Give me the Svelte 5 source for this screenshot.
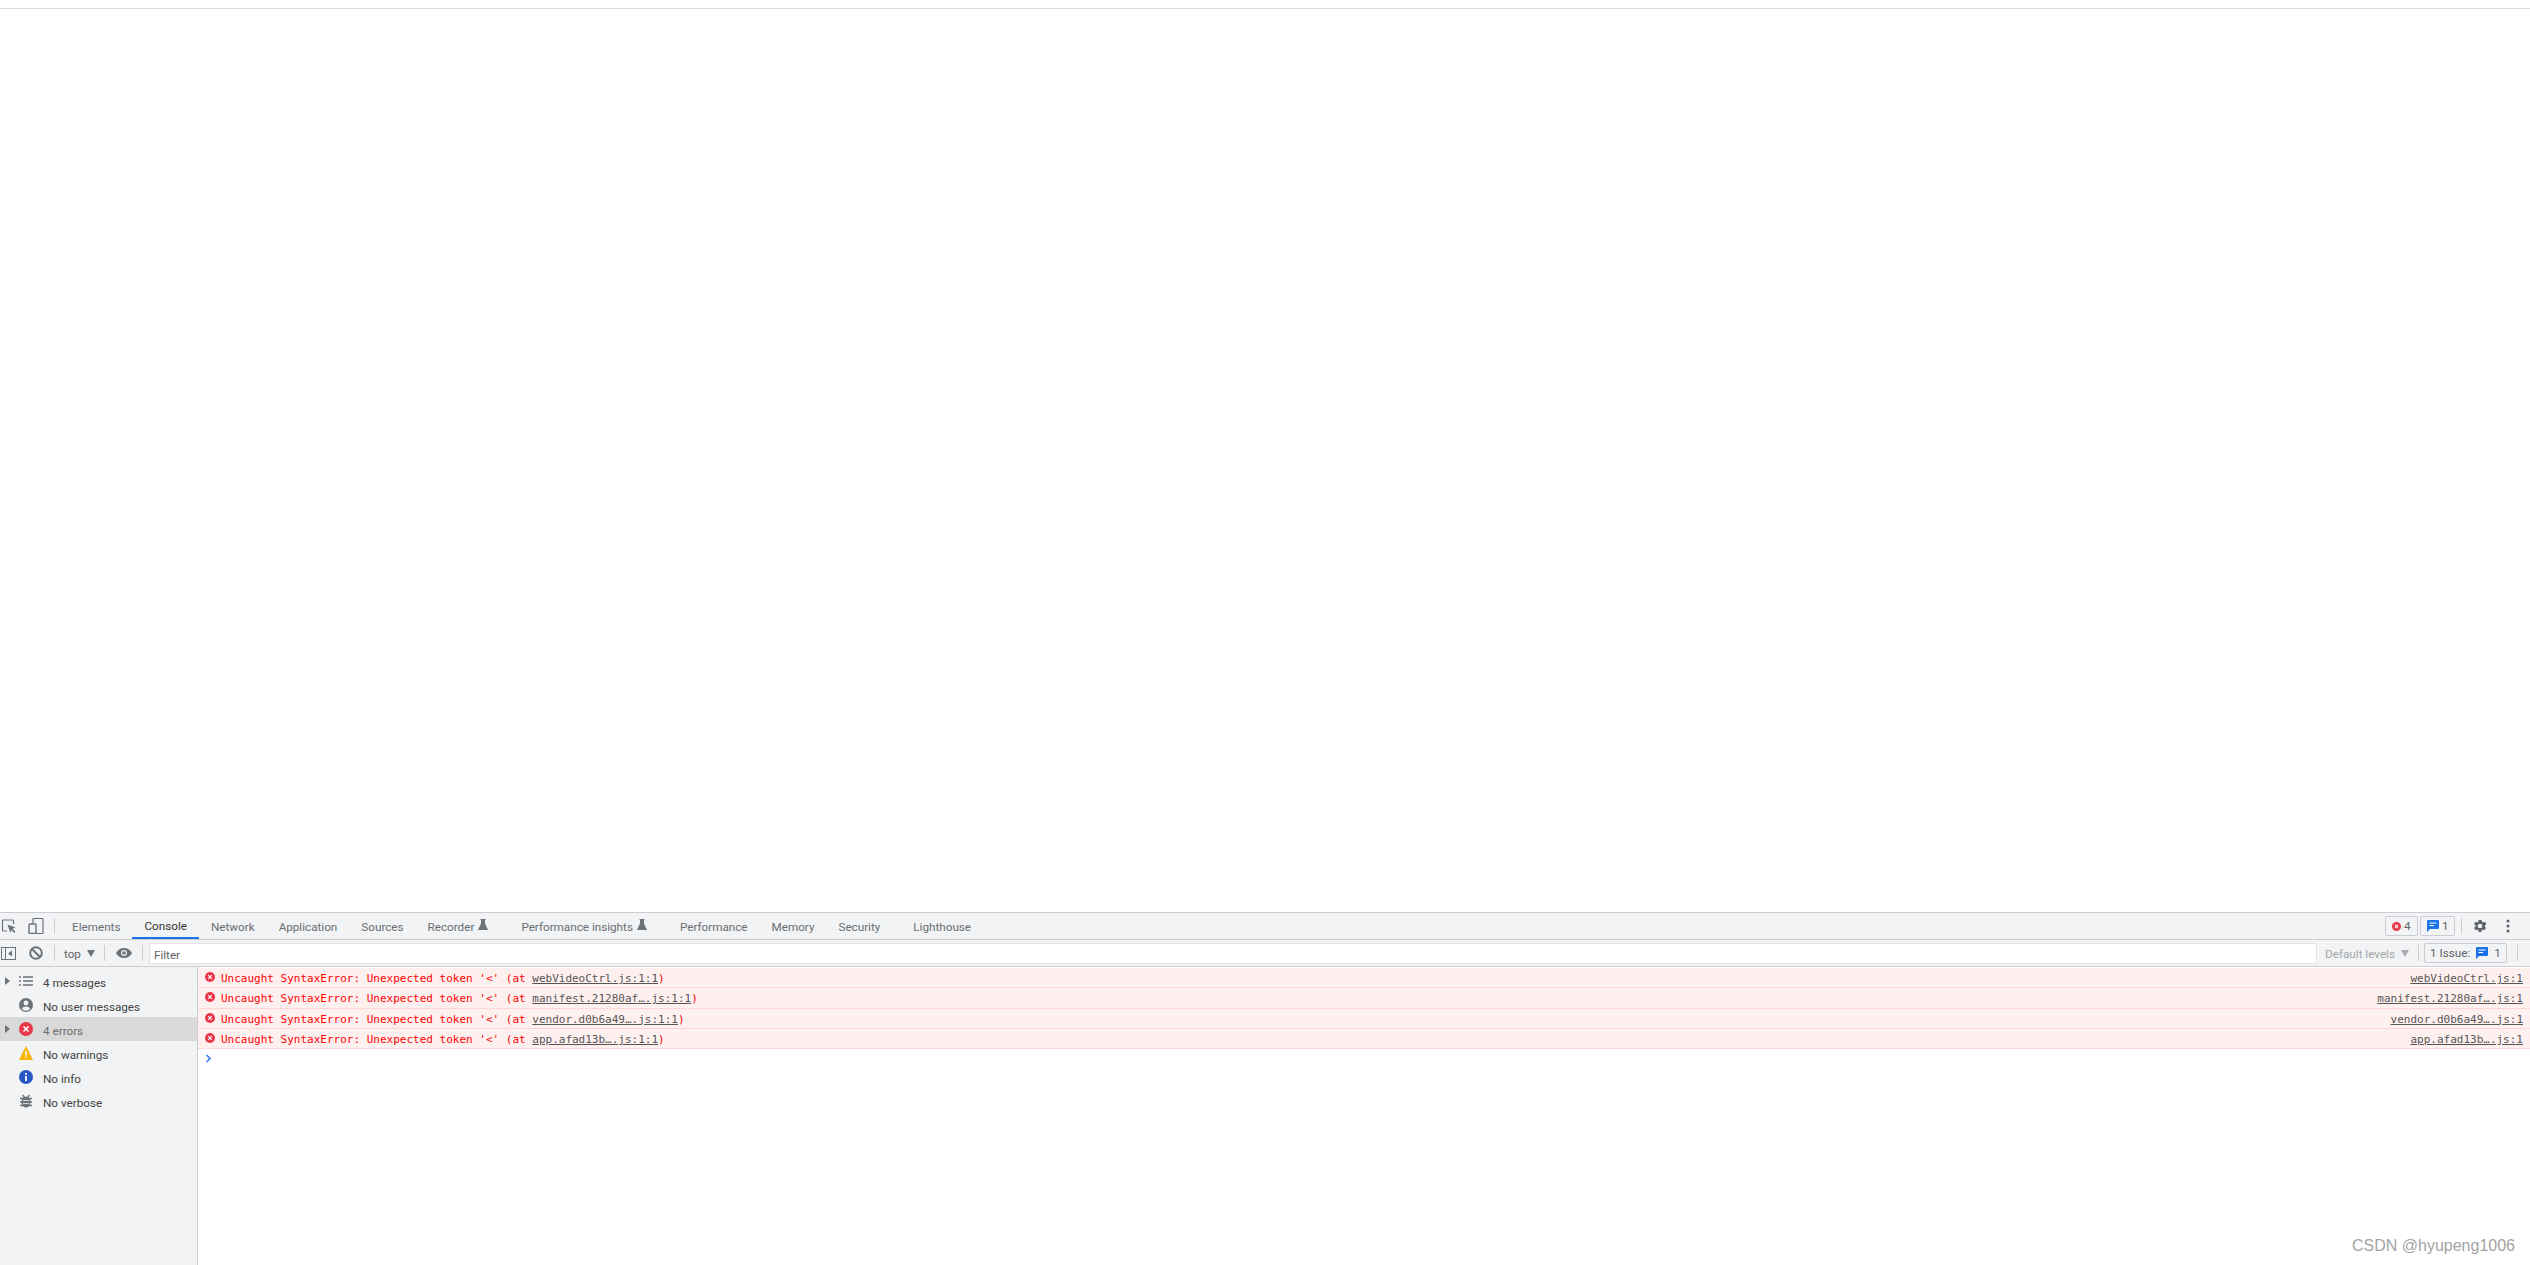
<script>
	const tabs = [
		{ name: 'Elements' },
		{ name: 'Console', active: true },
		{ name: 'Network' },
		{ name: 'Application' },
		{ name: 'Sources' },
		{ name: 'Recorder', flask: true },
		{ name: 'Performance insights', flask: true },
		{ name: 'Performance' },
		{ name: 'Memory' },
		{ name: 'Security', wide: true },
		{ name: 'Lighthouse' }
	];

	const errors = [
		{ link: 'webVideoCtrl.js:1:1', source: 'webVideoCtrl.js:1' },
		{ link: 'manifest.21280af….js:1:1', source: 'manifest.21280af….js:1' },
		{ link: 'vendor.d0b6a49….js:1:1', source: 'vendor.d0b6a49….js:1' },
		{ link: 'app.afad13b….js:1:1', source: 'app.afad13b….js:1' }
	];
</script>

{#snippet errorIcon(size)}
	<svg width={size} height={size} viewBox="0 0 14 14">
		<circle cx="7" cy="7" r="7" fill="#e8374a" />
		<path d="M4.5 4.5l5 5M9.5 4.5l-5 5" stroke="#fff" stroke-width="1.6" />
	</svg>
{/snippet}

{#snippet flask()}
	<svg class="flask" width="10" height="11" viewBox="0 0 10 11">
		<path d="M2.5 0h5v1H7v3.5l3 6.5H0l3-6.5V1h-.5z" fill="#6e7378" />
	</svg>
{/snippet}

{#snippet chat()}
	<svg width="12" height="12" viewBox="0 0 12 12">
		<path d="M1 0h10a1 1 0 0 1 1 1v7a1 1 0 0 1-1 1H3l-3 3V1a1 1 0 0 1 1-1z" fill="#1a73e8" />
		<path d="M2.5 3h7M2.5 5.5h4.500" stroke="#fff" stroke-width="1.2" />
	</svg>
{/snippet}

<div class="page">
	<div class="top-line"></div>
	<div class="viewport"></div>

	<div class="devtools">
		<div class="tabbar">
			<button class="icon-btn first" aria-label="Inspect">
				<svg width="16" height="16" viewBox="0 0 16 16">
					<path d="M6 13H2.500a1 1 0 0 1-1-1V3a1 1 0 0 1 1-1h9a1 1 0 0 1 1 1v3" fill="none" stroke="#6e7378" stroke-width="1.200" />
					<path d="M6.500 6.500l8 3-3 1.200 3 3-1.200 1.200-3-3-1 3z" fill="#6e7378" />
				</svg>
			</button>
			<button class="icon-btn device" aria-label="Device">
				<svg width="16" height="16" viewBox="0 0 16 16">
					<path d="M5 5V1.500a1 1 0 0 1 1-1h8a1 1 0 0 1 1 1v13a1 1 0 0 1-1 1H8" fill="none" stroke="#6e7378" stroke-width="1.200" />
					<rect x="1" y="6" width="7" height="9.500" rx="1" fill="none" stroke="#6e7378" stroke-width="1.400" />
				</svg>
			</button>
			<span class="sep tab-sep"></span>
			<div class="tabs">
				{#each tabs as tab}
					<div class="tab" class:active={tab.active} class:wide={tab.wide}>
						{tab.name}
						{#if tab.flask}{@render flask()}{/if}
					</div>
				{/each}
			</div>
			<div class="right">
				<div class="badge error-badge">{@render errorIcon(9)}<span>4</span></div>
				<div class="badge info-badge">{@render chat()}<span>1</span></div>
				<span class="sep"></span>
				<svg class="gear" width="16" height="16" viewBox="0 0 24 24">
					<path d="M19.400 13a7.700 7.700 0 0 0 0-2l2.200-1.700-2.100-3.600-2.600 1a7.600 7.600 0 0 0-1.700-1L14.100 3h-4.200l-.4 2.700a7.600 7.600 0 0 0-1.700 1l-2.600-1-2.100 3.600L5.300 11a7.700 7.700 0 0 0 0 2l-2.200 1.700 2.100 3.600 2.600-1a7.600 7.600 0 0 0 1.700 1l.4 2.700h4.200l.4-2.700a7.600 7.600 0 0 0 1.700-1l2.600 1 2.100-3.600zM12 15.500a3.500 3.500 0 1 1 0-7 3.500 3.500 0 0 1 0 7z" fill="#5f6368" fill-rule="evenodd" />
				</svg>
				<svg class="dots" width="4" height="14" viewBox="0 0 4 14">
					<circle cx="2" cy="2" r="1.500" fill="#5f6368" />
					<circle cx="2" cy="7" r="1.500" fill="#5f6368" />
					<circle cx="2" cy="12" r="1.500" fill="#5f6368" />
				</svg>
			</div>
		</div>

		<div class="toolbar">
			<svg class="side-toggle" width="15" height="13" viewBox="0 0 15 13">
				<rect x=".5" y=".5" width="14" height="12" fill="none" stroke="#6e7378" />
				<path d="M4.500 0v13" stroke="#6e7378" />
				<path d="M11 3.500v6l-4-3z" fill="#6e7378" />
			</svg>
			<svg class="block" width="14" height="14" viewBox="0 0 14 14">
				<circle cx="7" cy="7" r="5.800" fill="none" stroke="#6e7378" stroke-width="2" />
				<path d="M3 3l8 8" stroke="#6e7378" stroke-width="2" />
			</svg>
			<span class="sep s1"></span>
			<span class="top-label">top</span>
			<span class="caret"></span>
			<span class="sep s2"></span>
			<svg class="eye" width="16" height="10" viewBox="0 0 16 10">
				<path d="M8 0c3.500 0 6.500 2 8 5-1.500 3-4.500 5-8 5S1.500 8 0 5c1.500-3 4.500-5 8-5z" fill="#6e7378" />
				<circle cx="8" cy="5" r="3" fill="#f1f3f4" />
				<circle cx="8" cy="5" r="1.800" fill="#6e7378" />
			</svg>
			<span class="sep s3"></span>
			<div class="filter">Filter</div>
			<span class="levels">Default levels</span>
			<span class="caret light"></span>
			<span class="sep s4"></span>
			<div class="issues"><span>1 Issue:</span>{@render chat()}<span>1</span></div>
			<span class="sep s5"></span>
		</div>

		<div class="body">
			<aside class="sidebar">
				<div class="item">
					<span class="arrow"></span>
					<svg class="ico" width="14" height="10" viewBox="0 0 14 10">
						<path d="M0 1h2M4 1h10M0 5h2M4 5h10M0 9h2M4 9h10" stroke="#6e7378" stroke-width="1.500" />
					</svg>
					<span class="label">4 messages</span>
				</div>
				<div class="item">
					<svg class="ico solo" width="14" height="14" viewBox="0 0 14 14">
						<circle cx="7" cy="7" r="7" fill="#6e7378" />
						<circle cx="7" cy="5" r="2.400" fill="#f1f3f4" />
						<path d="M2.800 11c.8-1.800 2.500-2.500 4.200-2.500s3.400.7 4.200 2.500A5.500 5.500 0 0 1 7 12.800 5.500 5.500 0 0 1 2.800 11z" fill="#f1f3f4" />
					</svg>
					<span class="label">No user messages</span>
				</div>
				<div class="item selected">
					<span class="arrow"></span>
					<span class="ico">{@render errorIcon(14)}</span>
					<span class="label">4 errors</span>
				</div>
				<div class="item">
					<svg class="ico solo" width="14" height="14" viewBox="0 0 14 14">
						<path d="M7 0l7 14H0z" fill="#f4b400" />
						<path d="M7 5v4.500M7 10.500v1.500" stroke="#fff" stroke-width="1.500" />
					</svg>
					<span class="label">No warnings</span>
				</div>
				<div class="item">
					<svg class="ico solo" width="14" height="14" viewBox="0 0 14 14">
						<circle cx="7" cy="7" r="7" fill="#2a56c6" />
						<path d="M7 6v5M7 3v1.700" stroke="#fff" stroke-width="1.800" />
					</svg>
					<span class="label">No info</span>
				</div>
				<div class="item">
					<svg class="ico solo" width="14" height="14" viewBox="0 0 14 14">
						<path d="M1 4.500h12M1 8h12M1 11.500h12M3.500 1l2 2.500M10.500 1l-2 2.500" stroke="#6e7378" stroke-width="1.300" />
						<ellipse cx="7" cy="8" rx="4.500" ry="5.500" fill="#6e7378" />
						<path d="M4 6.500h6M4 9.500h6" stroke="#f1f3f4" stroke-width=".8" />
					</svg>
					<span class="label">No verbose</span>
				</div>
			</aside>

			<main class="console">
				{#each errors as err}
					<div class="row">
						<span class="row-icon">{@render errorIcon(10)}</span>
						<span class="msg">Uncaught SyntaxError: Unexpected token '&lt;' (at <u>{err.link}</u>)</span>
						<u class="source">{err.source}</u>
					</div>
				{/each}
				<svg class="prompt" width="7" height="9" viewBox="0 0 7 9">
					<path d="M1.500 1l3.500 3.500L1.500 8" fill="none" stroke="#367cf1" stroke-width="1.600" />
				</svg>
			</main>
		</div>
	</div>

	<div class="watermark">CSDN @hyupeng1006</div>
</div>

<style>
	:global(body) {
		margin: 0;
		background: #fff;
	}

	.page {
		position: relative;
		height: 1265px;
		display: flex;
		flex-direction: column;
		overflow: hidden;
		font-family: Roboto, "Open Sans", sans-serif;
		font-size: 11.700px;
		color: #444;
	}

	.top-line {
		margin-top: 8px;
		height: 1px;
		background: #dadada;
	}

	.viewport {
		flex: 1;
	}

	.devtools {
		height: 352px;
		display: flex;
		flex-direction: column;
		background: #f1f3f4;
		border-top: 1px solid #cacdd1;
	}

	.tabbar {
		height: 26px;
		display: flex;
		align-items: center;
		border-bottom: 1px solid #cacdd1;
	}

	.icon-btn {
		border: 0;
		padding: 0;
		background: none;
		display: flex;
	}

	.first {
		margin-left: 1px;
	}

	.device {
		margin-left: 11px;
	}

	.sep {
		width: 1px;
		height: 16px;
		background: #cacdd1;
		flex: none;
	}

	.tab-sep {
		margin-left: 10px;
		margin-right: 5px;
	}

	.tabs {
		display: flex;
		height: 100%;
	}

	.tab {
		display: flex;
		align-items: center;
		padding: 2px 12px 0;
		color: #6a6e72;
		box-sizing: border-box;
		height: 100%;
		white-space: nowrap;
	}

	.tab.active {
		color: #333;
		border-bottom: 2px solid #1a73e8;
	}

	.tab.wide {
		padding-right: 21px;
	}

	.flask {
		margin-left: 4px;
		margin-right: 9px;
		margin-top: -5px;
	}

	.right {
		margin-left: auto;
		display: flex;
		align-items: center;
		padding-right: 20px;
	}

	.badge {
		box-sizing: border-box;
		height: 20px;
		border: 1px solid #cacdd1;
		border-radius: 2px;
		display: flex;
		align-items: center;
		color: #5f6368;
		gap: 3px;
	}

	.error-badge {
		width: 33px;
		padding-left: 6px;
		margin-right: 2px;
	}

	.info-badge {
		width: 35px;
		padding-left: 6px;
		margin-right: 6px;
	}

	.gear {
		margin-left: 10px;
	}

	.dots {
		margin-left: 18px;
	}

	.toolbar {
		height: 26px;
		display: flex;
		align-items: center;
		border-bottom: 1px solid #cacdd1;
		color: #5f6368;
	}

	.side-toggle {
		margin-left: 1px;
	}

	.block {
		margin-left: 13px;
	}

	.s1 {
		margin-left: 11px;
	}

	.top-label {
		margin-left: 9px;
		padding-top: 2px;
	}

	.caret {
		width: 0;
		height: 0;
		margin-left: 6px;
		border-left: 4px solid transparent;
		border-right: 4px solid transparent;
		border-top: 7px solid #6e7378;
	}

	.caret.light {
		border-top-color: #a9acb0;
		margin-left: 6px;
	}

	.s2 {
		margin-left: 9px;
	}

	.eye {
		margin-left: 11px;
	}

	.s3 {
		margin-left: 10px;
	}

	.filter {
		box-sizing: border-box;
		margin-left: 6px;
		flex: 1;
		height: 21px;
		background: #fff;
		border: 1px solid #e2e4e6;
		padding-left: 4px;
		line-height: 22px;
		color: #5f6368;
	}

	.levels {
		margin-left: 8px;
		padding-top: 1px;
		color: #a4a7aa;
	}

	.s4 {
		margin-left: 9px;
	}

	.issues {
		box-sizing: border-box;
		margin-left: 5px;
		width: 83px;
		height: 20px;
		border: 1px solid #cacdd1;
		border-radius: 2px;
		display: flex;
		align-items: center;
		justify-content: center;
		gap: 6px;
	}

	.s5 {
		margin-left: 10px;
		margin-right: 12px;
	}

	.body {
		flex: 1;
		display: flex;
		min-height: 0;
	}

	.sidebar {
		box-sizing: border-box;
		width: 198px;
		padding-top: 2px;
		border-right: 1px solid #cacdd1;
	}

	.item {
		height: 24px;
		display: flex;
		align-items: center;
		padding-left: 5px;
	}

	.label {
		padding-top: 4px;
	}

	.item.selected {
		background: #d9d9d9;
		color: #6a6e72;
	}

	.arrow {
		width: 0;
		height: 0;
		border-top: 4px solid transparent;
		border-bottom: 4px solid transparent;
		border-left: 5px solid #6e7378;
	}

	.ico {
		display: flex;
		margin-left: 9px;
		margin-right: 10px;
	}

	.ico.solo {
		margin-left: 14px;
	}

	.console {
		flex: 1;
		background: #fff;
		padding-top: 1px;
	}

	.row {
		box-sizing: border-box;
		height: 20.250px;
		display: flex;
		align-items: center;
		padding: 0 7px 0 7px;
		background: #fff0f0;
		border-bottom: 1px solid #ffd6d6;
		font-family: "DejaVu Sans Mono", monospace;
		font-size: 11px;
		color: #f00;
	}

	.row-icon {
		display: flex;
		margin-right: 6px;
		margin-top: -1px;
	}

	.msg {
		white-space: pre;
		padding-top: 2px;
	}

	u {
		color: #555;
	}

	.source {
		margin-left: auto;
		padding-top: 2px;
	}

	.prompt {
		display: block;
		margin: 5px 0 0 7px;
	}

	.watermark {
		position: absolute;
		left: 2352px;
		top: 1237px;
		font-family: "Liberation Sans", sans-serif;
		font-size: 16px;
		color: #a3a3a3;
		white-space: nowrap;
	}
</style>
